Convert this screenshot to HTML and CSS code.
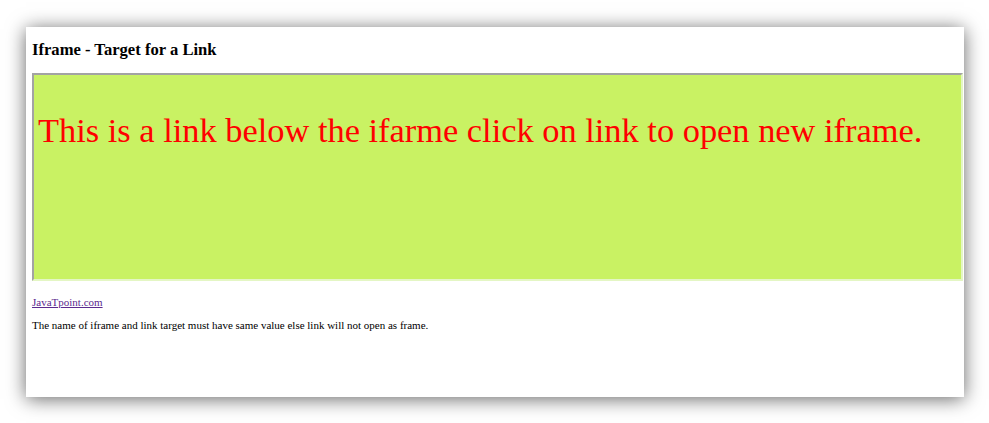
FILE: index.html
```html
<!DOCTYPE html>
<html>
<head>
<meta charset="utf-8">
<link rel="stylesheet" href="styles.css">
</head>
<body>
<div class="stage">
  <div class="panel">
    <h2 class="title">Iframe - Target for a Link</h2>
    <div class="frame">
      <p class="frame-text">This is a link below the ifarme click on link to open new iframe.</p>
    </div>
    <p class="link-line"><a class="link" href="#">JavaTpoint.com</a></p>
    <p class="note">The name of iframe and link target must have same value else link will not open as frame.</p>
  </div>
</div>
</body>
</html>
```

FILE: styles.css
```css
html, body {
  margin: 0;
  padding: 0;
  background: #ffffff;
}
body {
  width: 989px;
  height: 423px;
  overflow: hidden;
  font-family: "Liberation Serif", "Times New Roman", serif;
}
.stage {
  padding: 27px 0 0 26px;
}
.panel {
  box-sizing: border-box;
  width: 938px;
  height: 370px;
  background: #ffffff;
  box-shadow: 0 2px 18px rgba(0, 0, 0, 0.6);
  padding: 13px 0 0 6px;
}
.title {
  margin: 0;
  font-size: 16.6px;
  line-height: 20px;
  font-weight: bold;
  color: #000000;
}
.frame {
  box-sizing: border-box;
  margin-top: 13px;
  width: 931px;
  height: 208px;
  background: #c9f263;
  border-style: solid;
  border-width: 2px;
  border-top-color: #a3a3a3;
  border-left-color: #a3a3a3;
  border-right-color: #e4f6c4;
  border-bottom-color: #e4f6c4;
  padding: 34px 0 0 4px;
}
.frame-text {
  margin: 0;
  font-size: 34.4px;
  line-height: 42px;
  color: #ff0000;
  white-space: nowrap;
}
.link-line {
  margin: 15px 0 0 0;
  font-size: 11px;
  line-height: 13px;
}
.link {
  color: #5b2a8f;
  text-decoration: underline;
}
.note {
  margin: 10px 0 0 0;
  font-size: 11px;
  line-height: 13px;
  color: #000000;
}
```
